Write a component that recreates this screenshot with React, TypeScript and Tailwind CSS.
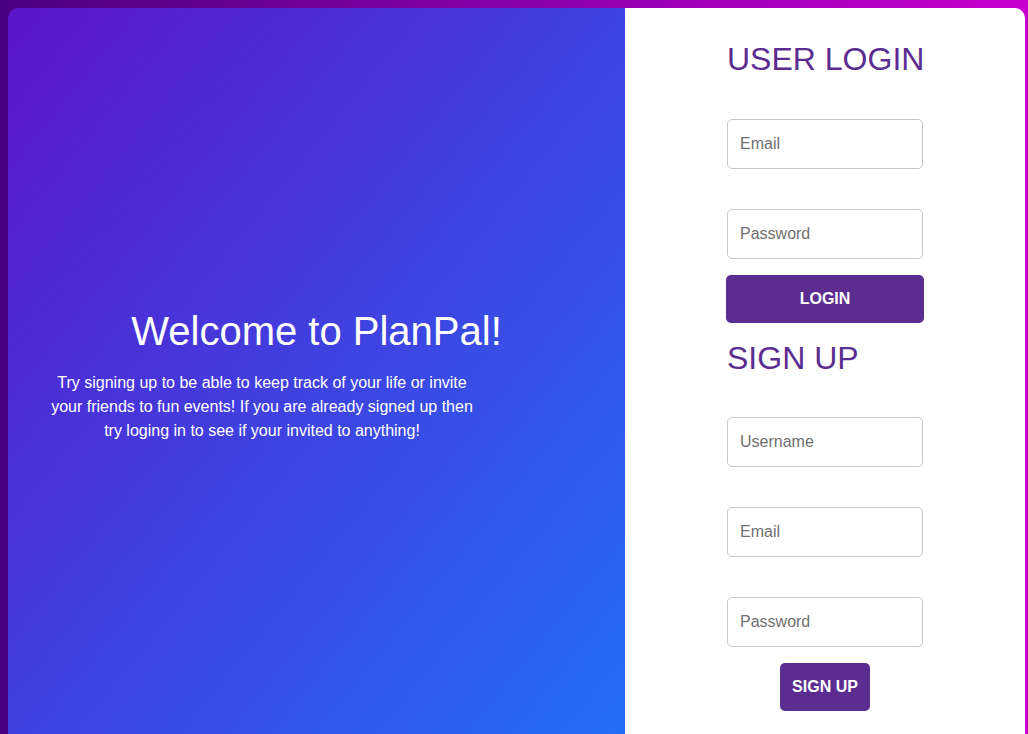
export default function App() {
  const inputCls =
    'block w-[196px] h-[50px] rounded-[5px] border border-[#c8c8c8] bg-white px-3 text-base text-[#333] placeholder:text-[#707070] outline-none'

  return (
    <div className="min-h-screen w-full bg-[linear-gradient(to_right,#4b0082,#c800d0)] pl-2 pr-[3px] pt-2 font-['Liberation_Sans',Arial,sans-serif]">
      <div className="flex h-[760px] overflow-hidden rounded-[10px]">
        {/* left side */}
        <section className="flex w-[617px] shrink-0 flex-col bg-[linear-gradient(to_bottom_right,#5c15c9,#2270f8)] pt-[301px] text-white">
          <h1 className="text-center text-[40px] leading-[45px]">Welcome to PlanPal!</h1>
          <p className="ml-[38px] mt-[17px] w-[432px] text-center text-base leading-6">
            Try signing up to be able to keep track of your life or invite your friends to fun events! If you
            are already signed up then try loging in to see if your invited to anything!
          </p>
        </section>

        {/* right side */}
        <section className="flex flex-1 justify-center bg-white pt-[33px]">
          <div className="flex w-[196px] flex-col">
            <h2 className="whitespace-nowrap text-[32px] leading-9 text-[#5c2d91]">USER LOGIN</h2>
            <input className={inputCls + ' mt-[42px]'} placeholder="Email" />
            <input className={inputCls + ' mt-10'} type="password" placeholder="Password" />
            <button className="-mx-px mt-4 h-12 w-[198px] rounded-[5px] bg-[#5c2d91] text-base font-bold text-white">
              LOGIN
            </button>
            <h2 className="mt-[17px] whitespace-nowrap text-[32px] leading-9 text-[#5c2d91]">SIGN UP</h2>
            <input className={inputCls + ' mt-[41px]'} placeholder="Username" />
            <input className={inputCls + ' mt-10'} placeholder="Email" />
            <input className={inputCls + ' mt-10'} type="password" placeholder="Password" />
            <button className="mx-auto mt-4 h-12 w-[90px] rounded-[5px] bg-[#5c2d91] text-base font-bold text-white">
              SIGN UP
            </button>
          </div>
        </section>
      </div>
    </div>
  )
}
